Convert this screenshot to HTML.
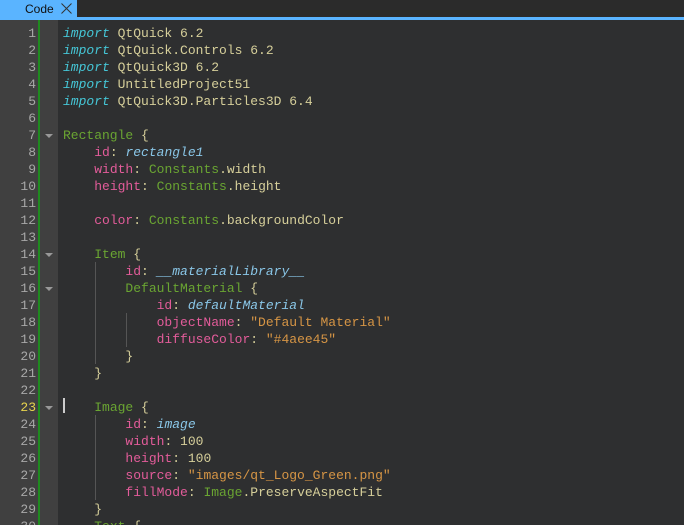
<!DOCTYPE html>
<html style="margin:0;width:684px;height:525px;overflow:hidden"><head><style>
body{margin:0;width:684px;height:525px;overflow:hidden;background:#2e2f30;font-family:"Liberation Mono",monospace;position:relative;}
#bar{position:absolute;left:0;top:0;width:684px;height:19px;background:#2b2b2b;}
#bar .line{position:absolute;left:0;top:17px;width:684px;height:3px;background:#5ab4ff;}
#tab{position:absolute;left:0;top:0;width:77px;height:19px;background:#5ab4ff;font-family:"Liberation Sans",sans-serif;font-size:12px;color:#111;}
#tab span{position:absolute;left:25px;top:2px;}
#gut{position:absolute;left:0;top:20px;width:58px;height:505px;background:#404040;}
#green{position:absolute;left:38px;top:20px;width:2px;height:505px;background:#1f8a1f;}
.ln{position:absolute;left:0;width:36px;text-align:right;font-size:13px;color:#a8a8a8;line-height:17px;}
.code{position:absolute;left:63px;font-size:13px;line-height:17px;white-space:pre;color:#d6cf9a;}
.k{color:#45c6d6;font-style:italic}
.t{color:#6aa532}
.p{color:#e35c9a}
.s{color:#d69545}
.i{color:#8ac7e8;font-style:italic}
.fold{position:absolute;left:45px;width:0;height:0;border-left:4px solid transparent;border-right:4px solid transparent;border-top:4px solid #999;}
.g{position:absolute;width:1px;background:#555;}
</style></head><body>
<div id="bar"><div class="line"></div></div>
<div id="tab"><span>Code</span>
<svg style="position:absolute;left:61px;top:3px" width="11" height="11"><path d="M0.5 0.5L10.5 10.5M10.5 0.5L0.5 10.5" stroke="#333" stroke-width="1"/></svg></div>
<div id="gut"></div><div id="green"></div>
<div id="lines"></div>
<div class="g" style="left:95px;top:262px;height:102px"></div>
<div class="g" style="left:126px;top:313px;height:34px"></div>
<div class="g" style="left:95px;top:415px;height:85px"></div>
<div style="position:absolute;left:63px;top:398px;width:2px;height:15px;background:#ccc"></div>
<script>
var L=[
'<span class="k">import</span> QtQuick 6.2',
'<span class="k">import</span> QtQuick.Controls 6.2',
'<span class="k">import</span> QtQuick3D 6.2',
'<span class="k">import</span> UntitledProject51',
'<span class="k">import</span> QtQuick3D.Particles3D 6.4',
'',
'<span class="t">Rectangle</span> {',
'    <span class="p">id</span>: <span class="i">rectangle1</span>',
'    <span class="p">width</span>: <span class="t">Constants</span>.width',
'    <span class="p">height</span>: <span class="t">Constants</span>.height',
'',
'    <span class="p">color</span>: <span class="t">Constants</span>.backgroundColor',
'',
'    <span class="t">Item</span> {',
'        <span class="p">id</span>: <span class="i">__materialLibrary__</span>',
'        <span class="t">DefaultMaterial</span> {',
'            <span class="p">id</span>: <span class="i">defaultMaterial</span>',
'            <span class="p">objectName</span>: <span class="s">"Default Material"</span>',
'            <span class="p">diffuseColor</span>: <span class="s">"#4aee45"</span>',
'        }',
'    }',
'',
'    <span class="t">Image</span> {',
'        <span class="p">id</span>: <span class="i">image</span>',
'        <span class="p">width</span>: 100',
'        <span class="p">height</span>: 100',
'        <span class="p">source</span>: <span class="s">"images/qt_Logo_Green.png"</span>',
'        <span class="p">fillMode</span>: <span class="t">Image</span>.PreserveAspectFit',
'    }',
'    <span class="t">Text</span> {'];
var h='';var folds=[7,14,16,23,30];
for(var n=1;n<=30;n++){var y=25+(n-1)*17;
h+='<div class="ln" style="top:'+y+'px;'+(n==23?'color:#e8d44d':'')+'">'+n+'</div>';
h+='<div class="code" style="top:'+y+'px">'+L[n-1]+'</div>';
if(folds.indexOf(n)>=0)h+='<div class="fold" style="top:'+(y+7)+'px"></div>';}
document.getElementById('lines').innerHTML=h;
</script>
</body></html>
